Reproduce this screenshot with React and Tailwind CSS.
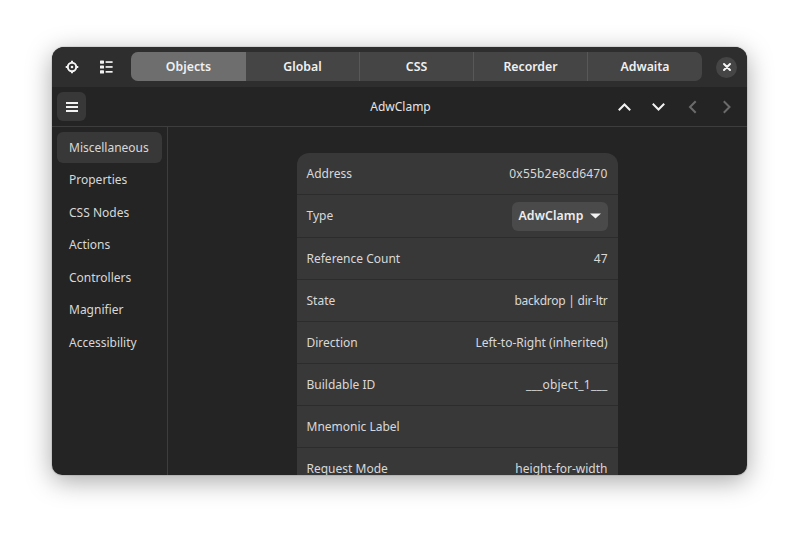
import React from "react";

const tabs = ["Objects", "Global", "CSS", "Recorder", "Adwaita"];
const side = ["Miscellaneous", "Properties", "CSS Nodes", "Actions", "Controllers", "Magnifier", "Accessibility"];
const rows = [
  ["Address", "0x55b2e8cd6470", "h-[42px]", "tracking-[0.2px]"],
  ["Type", null, "h-[43px]", ""],
  ["Reference Count", "47", "h-[42px]", ""],
  ["State", "backdrop | dir-ltr", "h-[42px]", "tracking-[-0.25px]"],
  ["Direction", "Left-to-Right (inherited)", "h-[42px]", ""],
  ["Buildable ID", "___object_1___", "h-[42px]", "tracking-[0.2px]"],
  ["Mnemonic Label", "", "h-[42px]", ""],
  ["Request Mode", "height-for-width", "h-[42px]", ""],
];

function Chevron({ d, dim }) {
  return (
    <div className="flex w-[34px] justify-center">
      <svg width="16" height="16" viewBox="0 0 16 16" fill="none" stroke={dim ? "#6b6b6b" : "#f2f2f2"} strokeWidth="2" strokeLinecap="square">
        <path d={d} />
      </svg>
    </div>
  );
}

export default function App() {
  return (
    <div className="h-[533px] w-[799px] overflow-hidden bg-white pl-[52px] pt-[47px] font-['Noto_Sans',sans-serif] text-[12px] text-[#d8d8d8]">
      <div className="flex h-[428px] w-[695px] flex-col overflow-hidden rounded-t-[12px] rounded-b-[10px] bg-[#242424] shadow-[0_6px_26px_rgba(0,0,0,0.35),0_0_0_1px_rgba(0,0,0,0.08)]">
        <div className="flex h-[40px] shrink-0 items-center bg-[#2e2e2e] pb-px pl-[12px]">
          <svg width="16" height="16" viewBox="0 0 16 16" fill="none" stroke="#f2f2f2" strokeWidth="2">
            <circle cx="8" cy="8" r="4.2" />
            <circle cx="8" cy="8" r="1.3" fill="#f2f2f2" stroke="none" />
            <path d="M8 1.7v2M8 12.3v2M1.7 8h2M12.3 8h2" />
          </svg>
          <svg className="ml-[18px]" width="16" height="16" viewBox="0 0 16 16" fill="#f2f2f2">
            <rect x="2" y="1.5" width="4" height="3.2" rx=".6" />
            <rect x="2" y="6.4" width="4" height="3.2" rx=".6" />
            <rect x="2" y="11.3" width="4" height="3.2" rx=".6" />
            <rect x="7.6" y="2.2" width="7" height="1.7" />
            <rect x="7.6" y="7.1" width="7" height="1.7" />
            <rect x="7.6" y="12" width="7" height="1.7" />
          </svg>
          <div className="ml-[17px] flex h-[29px] w-[571px] overflow-hidden rounded-[7px] bg-[#454545] text-[12.3px] font-semibold text-[#f0f0f0]">
            {tabs.map((t, i) => (
              <div
                key={t}
                className={
                  i === 0
                    ? "flex w-[115px] items-center justify-center bg-[#6e6e6e] pt-px"
                    : i === 4
                    ? "flex w-[114px] items-center justify-center pt-px"
                    : "flex w-[114px] items-center justify-center border-r border-[#585858] pt-px"
                }
              >
                {t}
              </div>
            ))}
          </div>
          <div className="ml-[14px] mt-px flex h-[21px] w-[21px] items-center justify-center rounded-full bg-[#454545]">
            <svg width="10" height="10" viewBox="0 0 10 10" stroke="#f5f5f5" strokeWidth="2" strokeLinecap="round">
              <path d="M2 2l6 6M8 2l-6 6" />
            </svg>
          </div>
        </div>
        <div className="flex h-[40px] shrink-0 items-center border-b border-[#3d3d3d] pl-[5px] pr-[3px]">
          <div className="flex-1">
            <div className="flex h-[29px] w-[29px] items-center justify-center rounded-[6px] bg-[#383838]">
              <svg width="14" height="12" viewBox="0 0 14 12" fill="#f2f2f2">
                <rect x="1" y="1" width="12" height="2" />
                <rect x="1" y="5" width="12" height="2" />
                <rect x="1" y="9" width="12" height="2" />
              </svg>
            </div>
          </div>
          <div className="text-[#e4e4e4]">AdwClamp</div>
          <div className="flex flex-1 justify-end">
            <Chevron d="M2.5 10.5 7.5 5.5l5 5" />
            <Chevron d="M2.5 5.5l5 5 5-5" />
            <Chevron d="M10 3 5 8l5 5" dim />
            <Chevron d="M5.5 3l5 5-5 5" dim />
          </div>
        </div>
        <div className="flex min-h-0 flex-1">
          <div className="flex w-[116px] shrink-0 flex-col gap-[1.5px] border-r border-[#3d3d3d] p-[5px]">
            {side.map((s, i) => (
              <div key={s} className={"flex h-[31px] items-center rounded-[6px] px-[12px] " + (i === 0 ? "bg-[#383838]" : "")}>
                {s}
              </div>
            ))}
          </div>
          <div className="flex min-w-0 flex-1 justify-center overflow-hidden pt-[26px]">
            <div className="mr-[1px] h-fit w-[321px] rounded-[12px] bg-[#383838]">
              {rows.map(([k, v, h, t], i) => (
                <div key={k} className={"flex items-center justify-between px-[10px] " + h + (i < rows.length - 1 ? " border-b border-[#2c2c2c]" : "")}>
                  <span>{k}</span>
                  {v === null ? (
                    <div className="flex h-[29px] items-center gap-[6px] rounded-[6px] bg-[#4a4a4a] px-[7px] text-[12.3px] font-semibold tracking-[0.1px] text-[#eeeeee]">
                      AdwClamp
                      <svg width="11" height="6" viewBox="0 0 11 6" fill="#f2f2f2">
                        <path d="M0 .5h11L5.5 5.5Z" />
                      </svg>
                    </div>
                  ) : (
                    <span className={t}>{v}</span>
                  )}
                </div>
              ))}
            </div>
          </div>
        </div>
      </div>
    </div>
  );
}
